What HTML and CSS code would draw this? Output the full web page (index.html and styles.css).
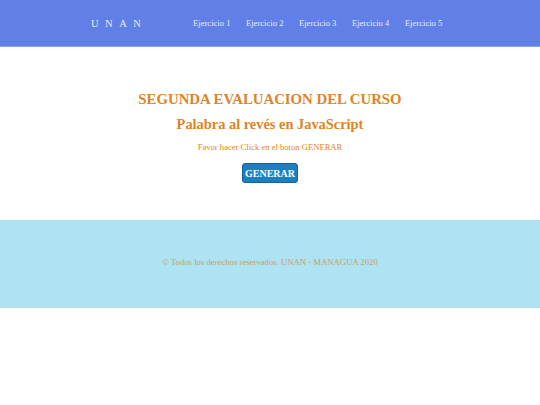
FILE: index.html
```html
<!DOCTYPE html>
<html lang="es">
<head>
<meta charset="utf-8">
<title>UNAN</title>
<link rel="stylesheet" href="styles.css">
</head>
<body>
<header class="topbar">
  <div class="brand">UNAN</div>
  <nav class="menu">
    <a href="#">Ejercicio 1</a>
    <a href="#">Ejercicio 2</a>
    <a href="#">Ejercicio 3</a>
    <a href="#">Ejercicio 4</a>
    <a href="#">Ejercicio 5</a>
  </nav>
</header>
<main class="content">
  <h1 class="title">SEGUNDA EVALUACION DEL CURSO</h1>
  <h2 class="subtitle">Palabra al revés en JavaScript</h2>
  <p class="hint">Favor hacer Click en el boton GENERAR</p>
  <button class="btn">GENERAR</button>
</main>
<footer class="footer">
  <p>© Todos los derechos reservados. UNAN - MANAGUA 2020</p>
</footer>
</body>
</html>
```
FILE: styles.css
```css
* { box-sizing: border-box; }
body {
  margin: 0;
  font-family: "Liberation Serif", "DejaVu Serif", serif;
  background: #ffffff;
}
.topbar {
  height: 47px;
  background: #6080e8;
  border-bottom: 1px solid #8ea2e6;
  display: flex;
  align-items: center;
  padding-left: 91px;
}
.brand {
  color: #e8ecfa;
  font-size: 10.5px;
  letter-spacing: 6.5px;
  width: 102px;
}
.menu {
  display: flex;
  gap: 15.5px;
}
.menu a {
  color: #e8ecfa;
  font-size: 8.6px;
  text-decoration: none;
}
.content {
  display: flex;
  flex-direction: column;
  align-items: center;
  padding-top: 44px;
  height: 173px;
}
.title {
  margin: 0;
  color: #e08324;
  font-size: 14.8px;
  font-weight: bold;
}
.subtitle {
  margin: 8px 0 0;
  color: #e08324;
  font-size: 14.4px;
  font-weight: bold;
}
.hint {
  margin: 9px 0 0;
  color: #e08324;
  font-size: 8.6px;
}
.btn {
  margin-top: 11px;
  width: 56px;
  height: 20px;
  padding: 0;
  background: #1e7fc0;
  border: 1px solid #18609c;
  border-radius: 3px;
  color: #ffffff;
  font-family: "Liberation Serif", serif;
  font-weight: bold;
  font-size: 10px;
}
.footer {
  height: 88px;
  background: #ade3f3;
  display: flex;
  align-items: center;
  justify-content: center;
  padding-bottom: 4px;
}
.footer p {
  margin: 0;
  color: #c8a060;
  font-size: 8.7px;
}
```
